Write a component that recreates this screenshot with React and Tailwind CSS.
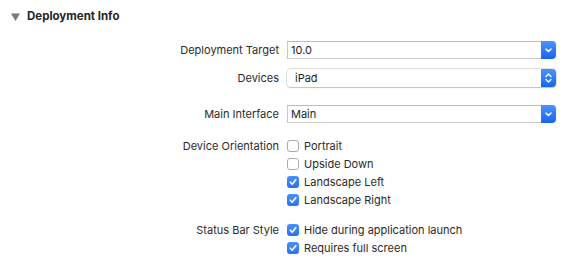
import React from "react";

const font = { fontFamily: "Inter, 'Liberation Sans', sans-serif" };

function Chevron({ double }) {
  return (
    <svg width="15" height="18" viewBox="0 0 15 18">
      {double ? (
        <g fill="none" stroke="#fff" strokeWidth="1.4" strokeLinecap="round" strokeLinejoin="round">
          <path d="M5 7.5 L7.5 5 L10 7.5" />
          <path d="M5 10.5 L7.5 13 L10 10.5" />
        </g>
      ) : (
        <path d="M5 8 L7.5 10.5 L10 8" fill="none" stroke="#fff" strokeWidth="1.5" strokeLinecap="round" strokeLinejoin="round" />
      )}
    </svg>
  );
}

function Combo({ value }) {
  return (
    <div className="flex h-[18px] w-[269px]">
      <div className="flex-1 flex items-center bg-white border border-[#c9c9c9] border-t-[#bdbdbd] border-r-0 pl-[3px] pt-[1px] text-[11px] text-[#1e1e1e]">
        {value}
      </div>
      <div className="w-[15px] h-[18px] rounded-r-[4px] bg-gradient-to-b from-[#4b93fb] to-[#1565f3] flex items-center justify-center">
        <Chevron />
      </div>
    </div>
  );
}

function Popup({ value }) {
  return (
    <div className="flex h-[18px] w-[269px] rounded-[4px] bg-white shadow-[0_0_0_0.5px_#c6c6c6,0_0.5px_1px_#c0c0c0] overflow-hidden">
      <div className="flex-1 flex items-center pl-[8px] pt-[1px] text-[11px] text-[#1e1e1e]">{value}</div>
      <div className="w-[15px] h-[18px] bg-gradient-to-b from-[#4b93fb] to-[#1565f3] flex items-center justify-center">
        <Chevron double />
      </div>
    </div>
  );
}

function Check({ checked, label }) {
  return (
    <div className="h-[18px] flex items-center gap-[5px]">
      {checked ? (
        <div className="w-[12px] h-[12px] rounded-[3px] bg-gradient-to-b from-[#4a8ffa] to-[#2a72f0] flex items-center justify-center">
          <svg width="10" height="10" viewBox="0 0 10 10">
            <path d="M2.3 5.2 L4.2 7.2 L7.8 2.8" fill="none" stroke="#fff" strokeWidth="1.6" strokeLinecap="round" strokeLinejoin="round" />
          </svg>
        </div>
      ) : (
        <div className="w-[12px] h-[12px] rounded-[3px] bg-white border border-[#acacac]" />
      )}
      <span className="text-[11px] text-[#2b2b2b] pt-[1px]">{label}</span>
    </div>
  );
}

function Row({ label, children, className = "" }) {
  return (
    <div className={"flex " + className}>
      <div className="w-[279px] text-right text-[11px] text-[#2b2b2b] h-[18px] pt-[1px] flex items-center justify-end">
        {label}
      </div>
      <div className="ml-[8px] flex flex-col">{children}</div>
    </div>
  );
}

export default function App() {
  return (
    <div className="w-[570px] h-[272px] bg-white" style={font}>
      <div className="h-[32px] flex items-center pl-[11px] pt-[1px]">
        <svg width="9" height="8" viewBox="0 0 9 8" className="mr-[7px]">
          <path d="M0 0.5 L9 0.5 L4.5 8 Z" fill="#7a7a7a" />
        </svg>
        <span className="text-[11.5px] font-bold text-[#262626]">Deployment Info</span>
      </div>
      <Row label="Deployment Target" className="mt-[9px]">
        <Combo value="10.0" />
      </Row>
      <Row label="Devices" className="mt-[10px]">
        <Popup value="iPad" />
      </Row>
      <Row label="Main Interface" className="mt-[18px]">
        <Combo value="Main" />
      </Row>
      <Row label="Device Orientation" className="mt-[14px]">
        <Check label="Portrait" />
        <Check label="Upside Down" />
        <Check checked label="Landscape Left" />
        <Check checked label="Landscape Right" />
      </Row>
      <Row label="Status Bar Style" className="mt-[12px]">
        <Check checked label="Hide during application launch" />
        <Check checked label="Requires full screen" />
      </Row>
    </div>
  );
}
